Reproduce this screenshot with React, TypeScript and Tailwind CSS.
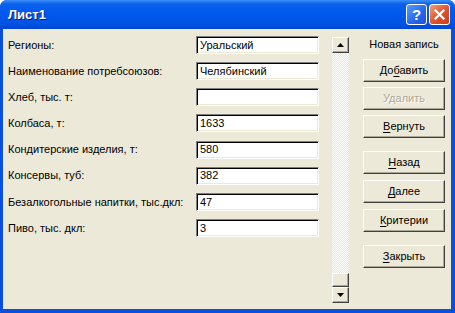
import React from 'react';

const rows: [string, string][] = [
  ['Регионы:', 'Уральский'],
  ['Наименование потребсоюзов:', 'Челябинский'],
  ['Хлеб, тыс. т:', ''],
  ['Колбаса, т:', '1633'],
  ['Кондитерские изделия, т:', '580'],
  ['Консервы, туб:', '382'],
  ['Безалкогольные напитки, тыс.дкл:', '47'],
  ['Пиво, тыс. дкл:', '3'],
];

// label, index of the underlined letter, disabled, top margin
const buttons: [string, number, boolean, string][] = [
  ['Добавить', 2, false, 'mt-[8px]'],
  ['Удалить', 3, true, 'mt-[5px]'],
  ['Вернуть', 0, false, 'mt-[5px]'],
  ['Назад', 0, false, 'mt-[13px]'],
  ['Далее', 0, false, 'mt-[6px]'],
  ['Критерии', 0, false, 'mt-[6px]'],
  ['Закрыть', 0, false, 'mt-[13px]'],
];

const raised =
  'border border-t-white border-l-white border-r-[#404040] border-b-[#404040] shadow-[inset_-1px_-1px_0_#aca899] bg-[#ece9d8]';

const FormButton = ({ label, ul, disabled, className }: { label: string; ul: number; disabled: boolean; className: string }) => (
  <div className={`${raised} ${className} h-[23px] w-[82px] flex items-center justify-center`}>
    <span className={disabled ? 'text-[#aca899] [text-shadow:1px_1px_0_#fff]' : 'text-black'}>
      {label.slice(0, ul)}
      <span className={disabled ? '' : 'underline underline-offset-2'}>{label[ul]}</span>
      {label.slice(ul + 1)}
    </span>
  </div>
);

const Arrow = ({ down }: { down?: boolean }) => (
  <svg width="7" height="4" viewBox="0 0 7 4">
    {down ? <polygon points="0,0 7,0 3.5,4" fill="#000" /> : <polygon points="3.5,0 7,4 0,4" fill="#000" />}
  </svg>
);

export default function App() {
  return (
    <div className="w-[455px] h-[313px] bg-[#0a50dc] rounded-t-[7px] flex flex-col overflow-hidden font-['Liberation_Sans',Arial,sans-serif] text-[11px] text-black">
      {/* Title bar */}
      <div className="h-[29px] shrink-0 flex items-center pl-[8px] pr-[5px] bg-[linear-gradient(to_bottom,#3d8ff8_0%,#0a62ec_14%,#0058ee_45%,#0054e3_80%,#0046d3_100%)]">
        <span className="text-white font-bold text-[13px] [text-shadow:1px_1px_0_#0a1e74]">Лист1</span>
        <div className="ml-auto flex gap-[2px]">
          <div className="w-[21px] h-[21px] rounded-[3px] border border-white bg-[linear-gradient(135deg,#5b9bff_0%,#2566f0_60%,#1a52d8_100%)] flex items-center justify-center text-white font-bold text-[15px] leading-none">
            ?
          </div>
          <div className="w-[21px] h-[21px] rounded-[3px] border border-white bg-[linear-gradient(135deg,#f0a080_0%,#e0582e_50%,#c83c12_100%)] flex items-center justify-center">
            <svg width="11" height="11" viewBox="0 0 11 11">
              <path d="M1.5 1.5 L9.5 9.5 M9.5 1.5 L1.5 9.5" stroke="#fff" strokeWidth="2.2" strokeLinecap="square" />
            </svg>
          </div>
        </div>
      </div>

      {/* Client area */}
      <div className="flex-1 ml-[3px] mr-[4px] mb-[4px] bg-[#ece9d8] flex">
        <div className="pl-[5px] pt-[7px] flex flex-col gap-[8.15px]">
          {rows.map(([label, value]) => (
            <div key={label} className="flex items-center h-[18px]">
              <div className="w-[188px] whitespace-nowrap">{label}</div>
              <div className="w-[123px] h-[18px] bg-white border border-t-[#808080] border-l-[#808080] border-r-white border-b-white shadow-[inset_1px_1px_0_#000,inset_-1px_-1px_0_#ece9d8] pl-[3px] flex items-center">
                {value}
              </div>
            </div>
          ))}
        </div>

        {/* Scrollbar */}
        <div className="ml-[13px] mt-[8px] w-[17px] h-[266px] flex flex-col">
          <div className={`${raised} h-[16px] flex items-center justify-center`}>
            <Arrow />
          </div>
          <div className="flex-1 bg-[repeating-conic-gradient(#fcfcf9_0_25%,#ece9d8_0_50%)] bg-[length:2px_2px]" />
          <div className={`${raised} h-[14px]`} />
          <div className={`${raised} h-[16px] flex items-center justify-center`}>
            <Arrow down />
          </div>
        </div>

        {/* Buttons */}
        <div className="ml-[14px] pt-[8px] flex flex-col w-[82px]">
          <div className="h-[14px] flex items-center justify-center">Новая запись</div>
          {buttons.map(([label, ul, disabled, mt]) => (
            <FormButton key={label} label={label} ul={ul} disabled={disabled} className={mt} />
          ))}
        </div>
      </div>
    </div>
  );
}
